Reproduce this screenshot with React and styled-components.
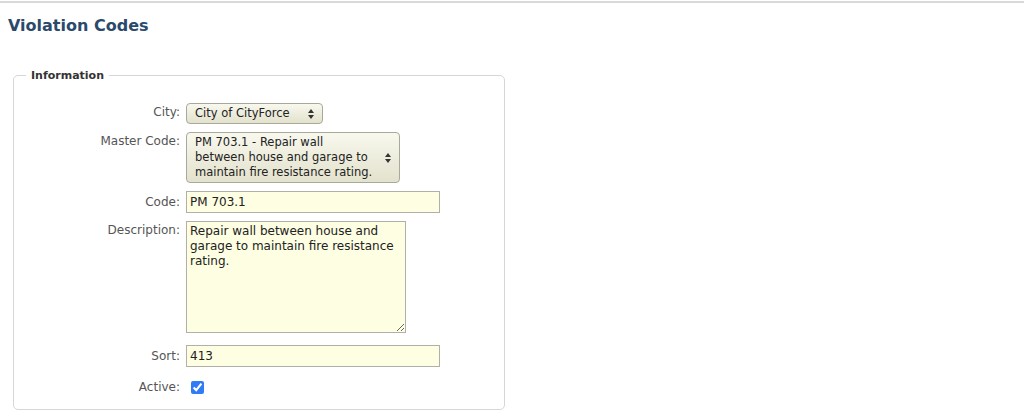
import styled, { createGlobalStyle } from "styled-components";

const GlobalStyle = createGlobalStyle`
  html, body {
    margin: 0;
    padding: 0;
    background: #fff;
  }
  body {
    font-family: "DejaVu Sans", Verdana, sans-serif;
    font-size: 12px;
    color: #222;
  }
`;

const Page = styled.div`
  border-top: 2px solid #d9d9d9;
  margin-top: 1px;
  padding: 0 8px;
`;

const Title = styled.h1`
  margin: 0;
  padding-top: 13px;
  height: 42px;
  box-sizing: border-box;
  font-size: 16px;
  font-weight: bold;
  color: #2b4a6b;
  line-height: 20px;
`;

const Fieldset = styled.fieldset`
  margin: 24px 0 0 5px;
  width: 492px;
  box-sizing: border-box;
  border: 1px solid #d6d6d6;
  border-radius: 5px;
  padding: 21px 0 14px 0;
`;

const Legend = styled.legend`
  margin-left: 12px;
  padding: 0 5px;
  font-size: 11px;
  font-weight: bold;
  color: #333;
`;

const Form = styled.div`
  display: grid;
  grid-template-columns: 166px auto;
  column-gap: 6px;
  row-gap: 8px;
  align-items: start;
`;

const Label = styled.label`
  text-align: right;
  color: #555;
  line-height: 15px;
  padding-top: ${(p) => p.$top || "0"};
`;

const Field = styled.div`
  display: flex;
  margin-bottom: ${(p) => p.$mb || "0"};
`;

const FakeSelect = styled.div`
  display: flex;
  align-items: center;
  justify-content: space-between;
  width: ${(p) => p.$w};
  box-sizing: border-box;
  padding: 2px 8px 2px 8px;
  min-height: 20px;
  border: 1px solid #a9a89c;
  border-radius: 4px;
  background: linear-gradient(#f8f8ee, #e3e2cd);
  color: #222;
  font-size: 11.5px;
  line-height: 15px;
`;

const SelectText = styled.span`
  white-space: pre-line;
`;

const TextInput = styled.input`
  width: ${(p) => p.$w};
  height: 22px;
  box-sizing: border-box;
  border: 1px solid #b0b0a8;
  background: #fefee2;
  font: inherit;
  color: #222;
  padding: 0 3px;
  outline: none;
`;

const TextArea = styled.textarea`
  width: 220px;
  height: 112px;
  box-sizing: border-box;
  border: 1px solid #b0b0a8;
  background: #fefee2;
  font: inherit;
  color: #222;
  padding: 2px 3px;
  line-height: 15px;
  outline: none;
`;

const Check = styled.input`
  margin: 6px 0 0 5px;
  width: 13px;
  height: 13px;
  accent-color: #2f7cf6;
`;

const Arrows = () => (
  <svg width="6" height="10" viewBox="0 0 6 10">
    <path d="M0 4 L3 0 L6 4 Z" fill="#333" />
    <path d="M0 6 L3 10 L6 6 Z" fill="#333" />
  </svg>
);

export default function App() {
  return (
    <>
      <GlobalStyle />
      <Page>
        <Title>Violation Codes</Title>
        <Fieldset>
          <Legend>Information</Legend>
          <Form>
            <Label $top="2px">City:</Label>
            <Field>
              <FakeSelect $w="137px">
                <SelectText>City of CityForce</SelectText>
                <Arrows />
              </FakeSelect>
            </Field>

            <Label $top="2px">Master Code:</Label>
            <Field>
              <FakeSelect $w="214px">
                <SelectText>
                  {"PM 703.1 - Repair wall\nbetween house and garage to\nmaintain fire resistance rating."}
                </SelectText>
                <Arrows />
              </FakeSelect>
            </Field>

            <Label $top="4px">Code:</Label>
            <Field>
              <TextInput $w="254px" readOnly value="PM 703.1" />
            </Field>

            <Label $top="2px">Description:</Label>
            <Field $mb="4px">
              <TextArea
                readOnly
                value="Repair wall between house and garage to maintain fire resistance rating."
              />
            </Field>

            <Label $top="4px">Sort:</Label>
            <Field>
              <TextInput $w="254px" readOnly value="413" />
            </Field>

            <Label $top="5px">Active:</Label>
            <Field>
              <Check type="checkbox" defaultChecked />
            </Field>
          </Form>
        </Fieldset>
      </Page>
    </>
  );
}
